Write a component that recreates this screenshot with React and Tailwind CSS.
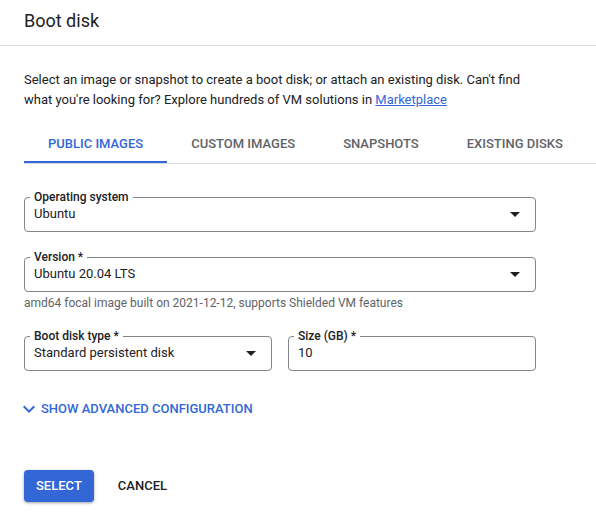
import { useState } from 'react';

const tabs = ['Public images', 'Custom images', 'Snapshots', 'Existing disks'];

function Caret() {
    return (
        <svg width="10" height="5" viewBox="0 0 10 5" className="shrink-0">
            <polygon points="0,0 10,0 5,5" fill="#202124" />
        </svg>
    );
}

function Field({ label, value, select = true, className = '' }) {
    return (
        <fieldset className={`border border-[#80868b] rounded-[4px] px-0 pb-[9px] ${className}`}>
            <legend className="ml-[5px] px-1 text-[12px] leading-[17px] font-medium text-[#202124]">
                {label}
            </legend>
            <div className="flex items-center justify-between pl-[9px] pr-[15px] text-[13px] leading-[16px] text-[#202124]">
                <span>{value}</span>
                {select && <Caret />}
            </div>
        </fieldset>
    );
}

export default function App() {
    const [tab, setTab] = useState(0);

    return (
        <div className="w-[596px] h-[523px] bg-white font-['Roboto','Liberation_Sans',sans-serif] text-[#202124] overflow-hidden">
            {/* Header */}
            <div className="h-[46px] border-b border-[#dadce0] px-6 pt-[9px]">
                <h1 className="text-[18px] leading-6 font-normal">Boot disk</h1>
            </div>

            <div className="pl-6">
                <p className="mt-6 pr-6 text-[13px] leading-[20px]">
                    Select an image or snapshot to create a boot disk; or attach an existing disk. Can't find
                    <br />
                    what you're looking for? Explore hundreds of VM solutions in{' '}
                    <a href="#" className="text-[#3367d6] underline">Marketplace</a>
                </p>

                {/* Tabs */}
                <div className="mt-[16px] flex border-b border-[#dadce0]">
                    {tabs.map((t, i) => (
                        <button
                            key={t}
                            onClick={() => setTab(i)}
                            className={`h-[37px] px-6 border-b-2 text-[13px] leading-[16px] font-medium uppercase ${tab === i
                                ? 'border-[#3367d6] text-[#3367d6]'
                                : 'border-transparent text-[#5f6368]'
                                }`}
                        >
                            {t}
                        </button>
                    ))}
                </div>

                {/* Fields */}
                <div className="w-[512px]">
                    <Field className="mt-[25px]" label="Operating system" value="Ubuntu" />
                    <Field className="mt-[17px]" label="Version *" value="Ubuntu 20.04 LTS" />
                    <p className="mt-[3px] text-[12px] leading-4 text-[#5f6368]">
                        amd64 focal image built on 2021-12-12, supports Shielded VM features
                    </p>
                    <div className="mt-[17px] grid grid-cols-2 gap-4">
                        <Field label="Boot disk type *" value="Standard persistent disk" />
                        <Field label="Size (GB) *" value="10" select={false} />
                    </div>
                </div>

                <button className="mt-[26px] flex items-center text-[13px] leading-4 font-medium uppercase text-[#3367d6]">
                    <svg width="24" height="24" viewBox="0 0 24 24" className="-ml-[7px]">
                        <path d="M16.59 8.59L12 13.17 7.41 8.59 6 10l6 6 6-6z" fill="#3367d6" />
                    </svg>
                    Show advanced configuration
                </button>

                {/* Actions */}
                <div className="mt-[49px] flex gap-3">
                    <button className="h-8 px-3 rounded-[4px] bg-[#3367d6] text-white text-[13px] font-medium uppercase shadow-[0_1px_2px_rgba(60,64,67,0.3),0_1px_3px_1px_rgba(60,64,67,0.15)]">
                        Select
                    </button>
                    <button className="h-8 px-3 rounded-[4px] text-[#202124] text-[13px] font-medium uppercase">
                        Cancel
                    </button>
                </div>
            </div>
        </div>
    );
}
